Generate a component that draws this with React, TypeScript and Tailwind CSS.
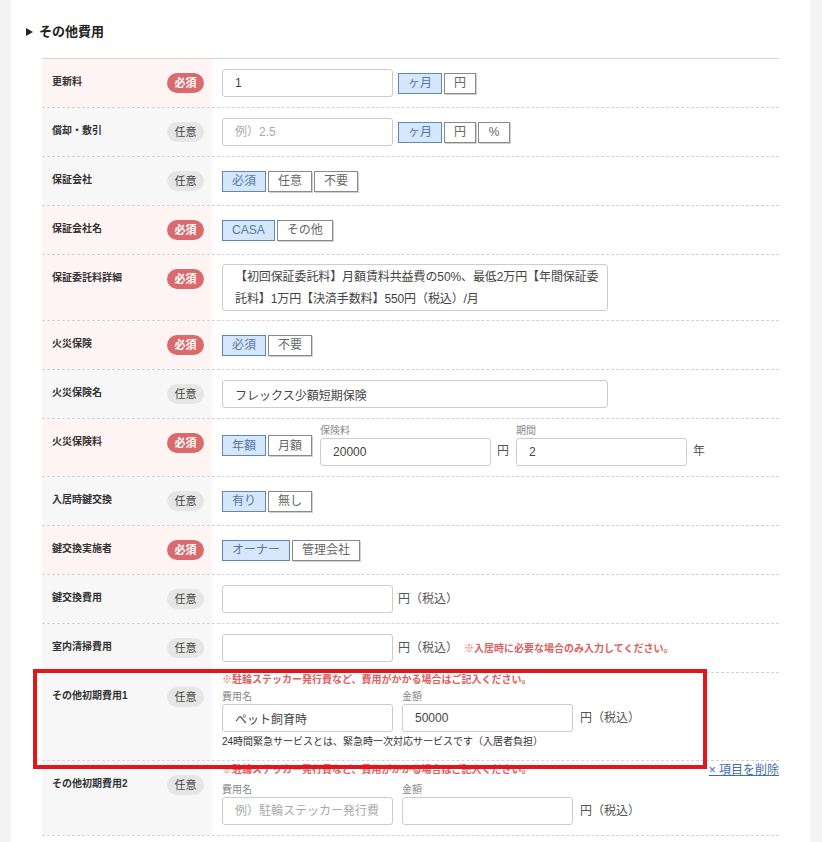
import React from "react";

const Badge = ({ req }: { req: boolean }) =>
  req ? (
    <span className="flex h-[20px] w-[37px] shrink-0 items-center justify-center rounded-full bg-[#da6b6c] text-[11px] font-bold leading-none text-white">
      必須
    </span>
  ) : (
    <span className="flex h-[20px] w-[37px] shrink-0 items-center justify-center rounded-full bg-[#e6e6e6] text-[11px] leading-none text-[#444]">
      任意
    </span>
  );

function Row({
  label,
  req,
  children,
  content = "flex min-h-[48px] flex-1 items-center gap-[5px] pl-[10px]",
}: {
  label: string;
  req: boolean;
  children: React.ReactNode;
  content?: string;
}) {
  return (
    <div className="relative flex border-b border-dashed border-[#d2d2d2]">
      <div
        className={
          req
            ? "flex w-[170px] shrink-0 items-start justify-between bg-[#fff4f4] pl-[10px] pr-[8px] pt-[14px]"
            : "flex w-[170px] shrink-0 items-start justify-between bg-[#f7f7f7] pl-[10px] pr-[8px] pt-[14px]"
        }
      >
        <span className="pt-[2px] text-[10px] font-bold leading-[14px] text-[#333]">{label}</span>
        <Badge req={req} />
      </div>
      <div className={content}>{children}</div>
    </div>
  );
}

function Toggle({ options, selected = 0 }: { options: string[]; selected?: number }) {
  return (
    <div className="flex shrink-0 gap-[2px]">
      {options.map((o, i) => (
        <span
          key={o}
          className={
            i === selected
              ? "flex h-[21px] min-w-[32px] items-center justify-center border border-[#5a88c0] bg-[#d6e6fb] px-[9px] text-[12px] text-[#5479a8]"
              : "flex h-[21px] min-w-[32px] items-center justify-center border border-[#8a8a8a] bg-white px-[9px] text-[12px] text-[#666] shadow-[1px_1px_0_#d0d0d0]"
          }
        >
          {o}
        </span>
      ))}
    </div>
  );
}

function Input({
  value,
  placeholder,
  wide = false,
}: {
  value?: string;
  placeholder?: string;
  wide?: boolean;
}) {
  return (
    <input
      readOnly
      defaultValue={value}
      placeholder={placeholder}
      className={
        wide
          ? "h-[28px] w-[386px] shrink-0 rounded-[3px] border border-[#cccccc] bg-white px-[12px] text-[12px] text-[#444] outline-none placeholder:text-[#aaa]"
          : "h-[28px] w-[171px] shrink-0 rounded-[3px] border border-[#cccccc] bg-white px-[12px] text-[12px] text-[#444] outline-none placeholder:text-[#aaa]"
      }
    />
  );
}

function Field({ label, children }: { label: string; children: React.ReactNode }) {
  return (
    <div className="flex flex-col">
      <span className="mb-[1px] text-[10px] leading-[12px] text-[#888]">{label}</span>
      {children}
    </div>
  );
}

const Unit = ({ children }: { children: React.ReactNode }) => (
  <span className="shrink-0 text-[12px] text-[#555]">{children}</span>
);

export default function App() {
  return (
    <div className="min-h-screen bg-[#f4f4f4] font-[family-name:'Liberation_Sans','Noto_Sans_CJK_JP',sans-serif]">
      <div className="ml-[11px] mr-[12px] min-h-[842px] bg-white pl-[15px] pr-[31px] pt-[24px]">
        <div className="flex h-[16px] items-center gap-[6px]">
          <svg width="7" height="8" viewBox="0 0 7 8" className="shrink-0">
            <path d="M0 0 L7 4 L0 8 Z" fill="#222" />
          </svg>
          <span className="text-[13px] font-bold leading-[16px] text-[#222]">その他費用</span>
        </div>

        <div className="ml-[16px] mt-[18px] border-t border-[#d6d6d6]">
          <Row label="更新料" req>
            <Input value="1" />
            <Toggle options={["ヶ月", "円"]} />
          </Row>
          <Row label="償却・敷引" req={false}>
            <Input placeholder="例）2.5" />
            <Toggle options={["ヶ月", "円", "%"]} />
          </Row>
          <Row label="保証会社" req={false}>
            <Toggle options={["必須", "任意", "不要"]} />
          </Row>
          <Row label="保証会社名" req>
            <Toggle options={["CASA", "その他"]} />
          </Row>
          <Row label="保証委託料詳細" req content="flex flex-1 items-center py-[9px] pl-[10px]">
            <div className="h-[47px] w-[386px] whitespace-nowrap rounded-[3px] border border-[#cccccc] pl-[12px] pt-[1px] text-[12px] leading-[22px] tracking-[-0.1px] text-[#444]">
              <div>【初回保証委託料】月額賃料共益費の50%、最低2万円【年間保証委</div>
              <div>託料】1万円【決済手数料】550円（税込）/月</div>
            </div>
          </Row>
          <Row label="火災保険" req>
            <Toggle options={["必須", "不要"]} />
          </Row>
          <Row label="火災保険名" req={false}>
            <Input value="フレックス少額短期保険" wide />
          </Row>
          <Row label="火災保険料" req content="flex flex-1 items-center pb-[10px] pl-[10px] pt-[6px]">
            <Toggle options={["年額", "月額"]} />
            <div className="ml-[8px] flex items-end">
              <Field label="保険料">
                <Input value="20000" />
              </Field>
              <span className="mb-[6px] ml-[6px] mr-[7px] text-[12px] text-[#555]">円</span>
              <Field label="期間">
                <Input value="2" />
              </Field>
              <span className="mb-[6px] ml-[6px] text-[12px] text-[#555]">年</span>
            </div>
          </Row>
          <Row label="入居時鍵交換" req={false}>
            <Toggle options={["有り", "無し"]} />
          </Row>
          <Row label="鍵交換実施者" req>
            <Toggle options={["オーナー", "管理会社"]} />
          </Row>
          <Row label="鍵交換費用" req={false}>
            <Input />
            <Unit>円（税込）</Unit>
          </Row>
          <Row label="室内清掃費用" req={false}>
            <Input />
            <Unit>円（税込）</Unit>
            <span className="ml-[1px] text-[10px] font-bold text-[#dc5f5f]">※入居時に必要な場合のみ入力してください。</span>
          </Row>

          <div className="relative">
            <Row label="その他初期費用1" req={false} content="flex flex-1 flex-col items-start pb-[11px] pl-[10px] pt-[1px]">
              <span className="text-[10px] font-bold leading-[12px] text-[#dc5f5f]">
                ※駐輪ステッカー発行費など、費用がかかる場合はご記入ください。
              </span>
              <div className="mt-[5px] flex items-end gap-[9px]">
                <Field label="費用名">
                  <Input value="ペット飼育時" />
                </Field>
                <Field label="金額">
                  <div className="flex items-center gap-[7px]">
                    <Input value="50000" />
                    <Unit>円（税込）</Unit>
                  </div>
                </Field>
              </div>
              <span className="mt-[3px] text-[10px] leading-[14px] text-[#333]">
                24時間緊急サービスとは、緊急時一次対応サービスです（入居者負担）
              </span>
            </Row>
            <div className="pointer-events-none absolute left-[-9px] top-[-4px] z-10 h-[100px] w-[674px] border-[4px] border-[#e3151d]" />
          </div>

          <Row label="その他初期費用2" req={false} content="flex flex-1 flex-col pb-[10px] pl-[10px] pt-[2px]">
            <div className="flex items-center justify-between">
              <span className="text-[10px] font-bold leading-[12px] text-[#dc5f5f]">
                ※駐輪ステッカー発行費など、費用がかかる場合はご記入ください。
              </span>
              <a className="text-[12px] leading-[14px] text-[#3f6fa8] underline">× 項目を削除</a>
            </div>
            <div className="mt-[7px] flex items-end gap-[9px]">
              <Field label="費用名">
                <Input placeholder="例）駐輪ステッカー発行費" />
              </Field>
              <Field label="金額">
                <div className="flex items-center gap-[7px]">
                  <Input />
                  <Unit>円（税込）</Unit>
                </div>
              </Field>
            </div>
          </Row>
        </div>
      </div>
    </div>
  );
}
